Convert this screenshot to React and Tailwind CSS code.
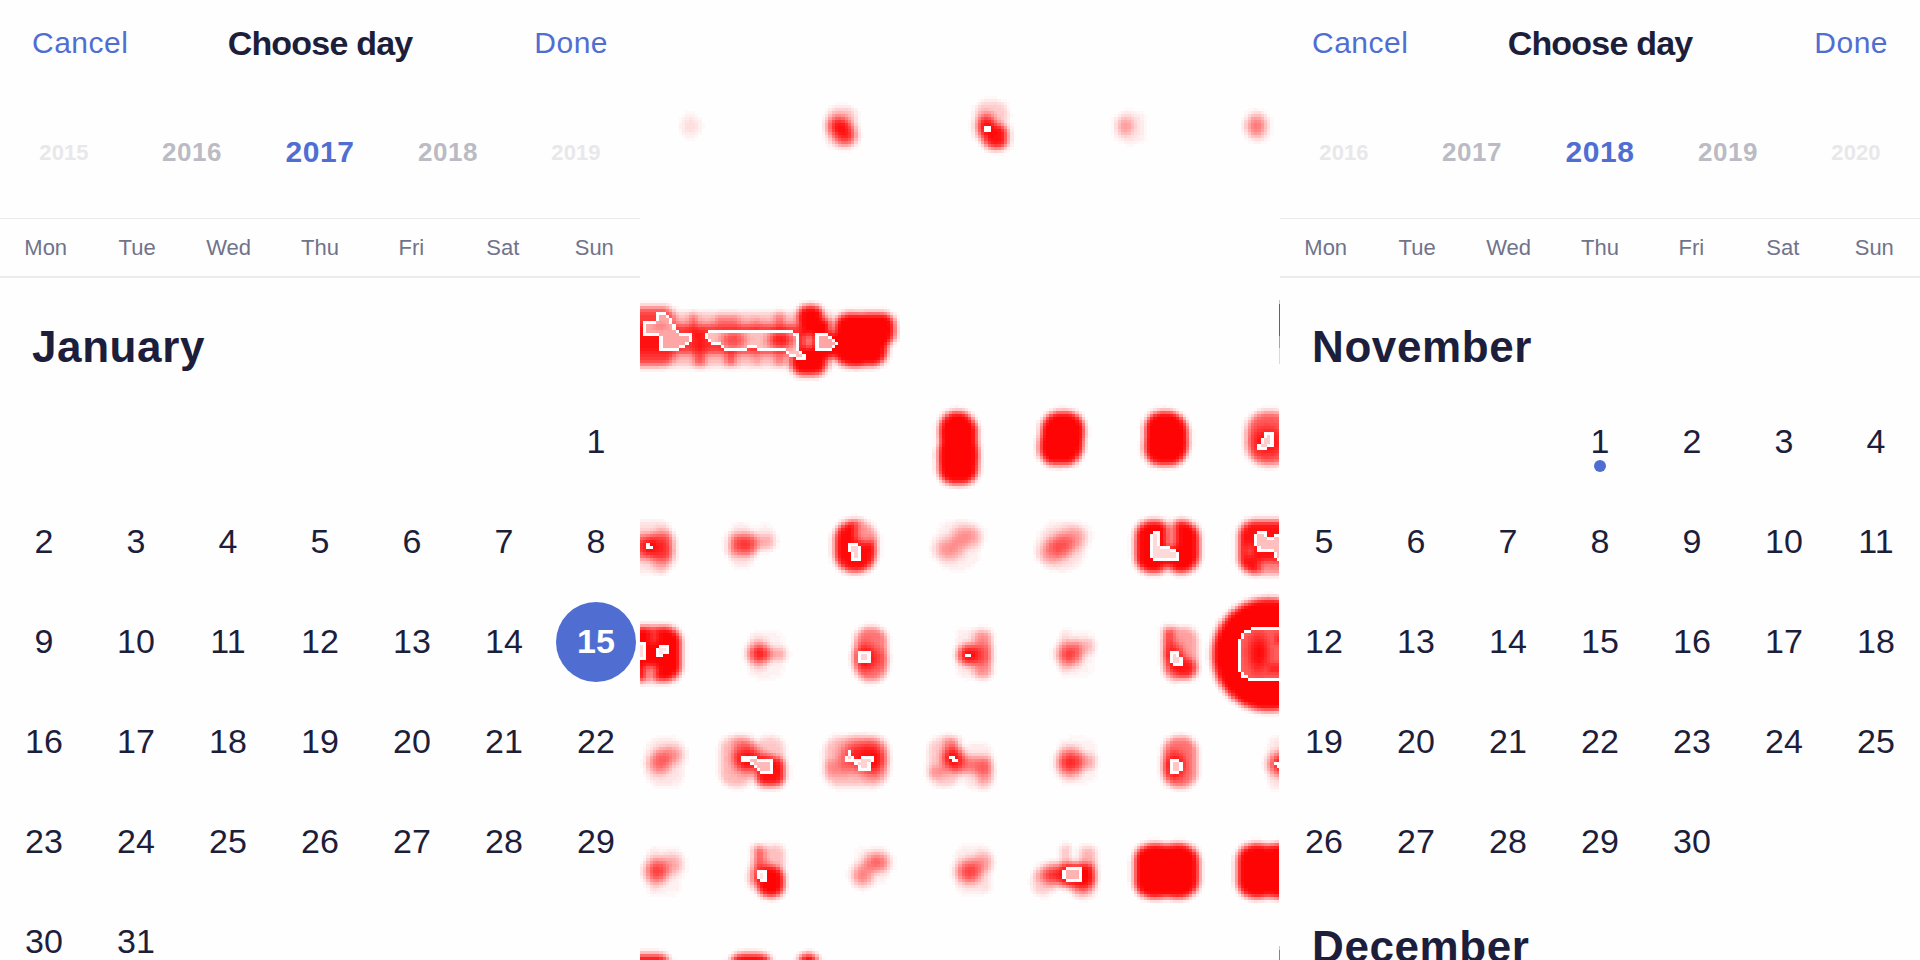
import React from "react";

const WEEKDAYS = ["Mon", "Tue", "Wed", "Thu", "Fri", "Sat", "Sun"];

const YEAR_STYLES = [
  "pt-px text-[22px] tracking-[0.1px] text-[#e8e8eb]",
  "text-[26px] tracking-[0.5px] text-[#bbbbc4]",
  "text-[30px] tracking-[0.6px] text-[#506ed2]",
  "text-[26px] tracking-[0.5px] text-[#bbbbc4]",
  "pt-px text-[22px] tracking-[0.1px] text-[#e8e8eb]",
];

function Day({ value, selected, marked }) {
  if (!value) return <div />;
  return (
    <div className="flex items-center justify-center">
      <div
        className={
          "relative flex size-20 items-center justify-center rounded-full pb-[2px] text-[34px] leading-none " +
          (selected ? "bg-[#506ed2] font-bold text-white" : "text-[#1c1e3c]")
        }
      >
        {value}
        {marked && <span className="absolute bottom-[10px] left-[34px] size-3 rounded-full bg-[#506ed2]" />}
      </div>
    </div>
  );
}

function Month({ name, offset, days, selected, marked }) {
  const cells = days ? [...Array(offset).fill(0), ...Array.from({ length: days }, (_, i) => i + 1)] : [];
  return (
    <section>
      <h2 className="flex h-[100px] items-center pl-8 pt-[9px] text-[44px] font-bold leading-none tracking-[0.6px] text-[#1c1e3c]">
        {name}
      </h2>
      <div className="-mx-[2px] grid auto-rows-[100px] grid-cols-7">
        {cells.map((d, i) => (
          <Day key={i} value={d} selected={d && d === selected} marked={d && d === marked} />
        ))}
      </div>
    </section>
  );
}

function Picker({ years, children }) {
  return (
    <div className="flex h-[960px] w-[640px] shrink-0 flex-col overflow-hidden bg-[#fefefe]">
      <header className="grid h-[86px] shrink-0 grid-cols-[1fr_auto_1fr] items-center px-8 pb-px leading-none">
        <button className="justify-self-start text-[30px] tracking-[0.5px] text-[#506ed2]">Cancel</button>
        <h1 className="text-[34px] font-bold tracking-[-0.8px] text-[#1c1e3c]">Choose day</h1>
        <button className="justify-self-end text-[30px] tracking-[0.5px] text-[#506ed2]">Done</button>
      </header>
      <nav className="grid h-[132px] shrink-0 grid-cols-5 items-center text-center font-bold leading-none">
        {years.map((y, i) => (
          <span key={y} className={YEAR_STYLES[i]}>{y}</span>
        ))}
      </nav>
      <div className="grid h-[60px] shrink-0 grid-cols-7 items-center border-b-2 border-t border-[#ebebed] text-center text-[22px] leading-none text-[#70738a]">
        {WEEKDAYS.map((d) => (
          <span key={d}>{d}</span>
        ))}
      </div>
      <div className="pt-[14px]">{children}</div>
    </div>
  );
}

/*
 * Heat map data. Each group has an origin and scale; `s` are soft rounded
 * boxes [x0, y0, x1, y1, radius, amount, fade] (a negative amount lightens),
 * `p` are contour areas [interior amount, points] with a white border.
 */
const GROUPS = [
  {
    o: [640, 80], k: [2.45, 2.95],
    s: [
      [88, 85, 160, 185, 28, 0.14, 40],
      [450, 70, 540, 207, 35, 0.22, 22], [444, 88, 532, 186, 35, 0.95, 38], [462, 115, 544, 210, 35, 0.8, 38],
      [812, 53, 910, 155, 40, 0.2, 20], [810, 78, 888, 200, 28, 1, 38], [830, 118, 915, 217, 38, 0.95, 30],
      [1160, 85, 1245, 195, 35, 0.09, 20], [1154, 92, 1224, 181, 28, 0.34, 38],
      [1475, 80, 1555, 195, 35, 0.25, 38], [1470, 82, 1544, 188, 28, 0.4, 38],
    ],
    p: [[0, [847, 134, 857, 134, 857, 156, 847, 156]]],
  },
  {
    o: [640, 290], k: [3, 3],
    s: [
      [-60, 55, 590, 242, 20, 0.26, 28], [-60, 88, 560, 207, 40, 0.75, 32], [-80, 35, 118, 242, 50, 0.7, 32],
      [138, 60, 182, 150, 20, 0.5, 25], [150, 110, 208, 240, 20, 0.6, 25], [215, 65, 310, 125, 20, 0.35, 25],
      [245, 140, 300, 238, 20, 0.6, 25], [330, 75, 370, 235, 20, 0.3, 25], [395, 58, 443, 238, 20, 0.45, 25],
      [460, 33, 563, 128, 46, 1, 26], [438, 165, 575, 270, 52, 1, 28], [475, 80, 580, 215, 15, 1, 20],
      [570, 56, 700, 242, 58, 1, 26], [630, 56, 778, 180, 52, 1, 26], [600, 90, 755, 240, 58, 1, 26], [530, 115, 660, 215, 15, 1, 26],
      [482, 125, 530, 182, 20, -0.5, 20],
    ],
    p: [
      [0.34, [6, 92, 48, 92, 48, 70, 78, 70, 95, 90, 117, 125, 159, 130, 148, 165, 117, 178, 80, 186, 57, 178, 57, 137, 17, 137, 6, 125]],
      [0.26, [198, 130, 215, 120, 440, 120, 478, 130, 482, 186, 500, 200, 488, 216, 465, 205, 430, 180, 330, 178, 265, 187, 240, 165, 215, 160, 198, 145]],
      [0.35, [530, 130, 560, 130, 575, 142, 594, 157, 594, 166, 578, 176, 560, 186, 530, 186]],
    ],
    h: [[220, 105, 340, 195, 25, 0.6, 40], [360, 105, 485, 195, 25, 0.85, 40], [20, 90, 100, 130, 20, 0.2, 40]],
  },
  {
    o: [920, 390], k: [3, 3],
    s: [
      [47, 52, 177, 190, 60, 1, 26], [42, 130, 187, 296, 60, 1, 26], [48, 85, 184, 240, 36, 1, 26],
      [353, 52, 505, 190, 65, 1, 26], [345, 105, 497, 238, 60, 1, 26], [352, 85, 502, 205, 36, 1, 28],
      [662, 52, 805, 180, 62, 1, 26], [660, 105, 810, 238, 60, 1, 26], [666, 60, 817, 230, 70, 1, 26],
      [965, 50, 1130, 240, 75, 0.65, 32], [968, 85, 1112, 225, 35, 0.95, 38],
      [35, 380, 190, 550, 70, 0.06, 20], [22, 425, 155, 530, 40, 0.42, 42], [68, 388, 208, 492, 40, 0.42, 42],
      [345, 385, 505, 552, 75, 0.1, 20], [334, 435, 460, 540, 38, 0.4, 40], [358, 408, 492, 522, 38, 0.6, 42], [405, 385, 525, 495, 35, 0.3, 35],
      [632, 378, 770, 562, 62, 1, 28], [715, 378, 852, 562, 68, 1, 28], [650, 400, 830, 550, 30, 0.6, 30],
      [728, 365, 778, 480, 20, -0.5, 20], [718, 515, 762, 570, 15, -0.4, 22],
      [942, 378, 1200, 565, 62, 0.95, 28], [1005, 500, 1100, 570, 20, -0.5, 30], [965, 455, 1010, 510, 20, -0.25, 25],
    ],
    p: [
      [0.2, [1016, 182, 1016, 162, 1026, 160, 1026, 140, 1036, 128, 1058, 128, 1058, 168, 1038, 170, 1036, 182]],
      [0.14, [693, 430, 703, 422, 724, 422, 724, 468, 745, 470, 775, 488, 775, 511, 703, 511, 693, 500]],
      [0.25, [1004, 430, 1017, 422, 1036, 422, 1038, 440, 1062, 440, 1066, 430, 1095, 430, 1095, 511, 1068, 511, 1055, 482, 1036, 482, 1034, 489, 1017, 489, 1004, 465]],
    ],
  },
  {
    o: [640, 500], k: [3, 3],
    s: [
      [-40, 52, 104, 228, 50, 0.12, 22], [-60, 85, 112, 195, 35, 0.5, 32], [10, 62, 120, 236, 40, 0.6, 42], [-20, 98, 80, 182, 26, 1, 38],
      [260, 60, 350, 215, 40, 0.1, 25], [340, 65, 410, 160, 30, 0.06, 20], [250, 85, 360, 185, 35, 0.38, 32], [270, 88, 418, 160, 30, 0.28, 30], [256, 96, 375, 178, 26, 0.55, 38],
      [570, 48, 722, 230, 72, 0.97, 28], [635, 45, 725, 140, 35, -0.55, 30],
      [-70, 366, 138, 558, 62, 1, 28], [0, 485, 62, 570, 20, -0.6, 32], [20, 370, 62, 440, 18, -0.25, 24],
      [320, 385, 440, 545, 35, 0.05, 20], [322, 393, 390, 530, 28, 0.1, 28], [305, 412, 408, 510, 38, 0.85, 40], [340, 430, 452, 495, 28, 0.32, 30],
      [635, 370, 752, 555, 52, 0.55, 26], [624, 408, 728, 538, 42, 1, 38], [685, 430, 757, 525, 32, 0.38, 36],
    ],
    p: [
      [0, [16, 131, 28, 131, 28, 140, 38, 140, 38, 151, 16, 151]],
      [0.18, [624, 131, 656, 131, 665, 148, 665, 181, 636, 181, 634, 152, 624, 152]],
      [0.15, [-20, 422, 19, 422, 19, 481, -20, 481]],
      [0.1, [46, 440, 58, 440, 58, 431, 78, 431, 88, 442, 88, 463, 68, 463, 66, 472, 46, 472]],
      [0.18, [653, 460, 662, 450, 694, 450, 694, 482, 684, 493, 662, 493, 653, 484]],
    ],
  },
  {
    o: [940, 580], k: [3, 3],
    s: [
      [42, 140, 165, 300, 30, 0.08, 18], [86, 138, 168, 308, 36, 0.42, 32], [42, 178, 166, 270, 38, 0.45, 32], [38, 182, 136, 268, 26, 1, 36],
      [350, 140, 470, 300, 40, 0.04, 20], [330, 165, 448, 280, 42, 0.75, 42], [355, 142, 395, 290, 18, 0.1, 18], [385, 165, 474, 235, 28, 0.26, 28],
      [660, 132, 782, 308, 48, 0.38, 22], [658, 130, 715, 250, 20, 0.7, 30], [660, 165, 750, 318, 35, 1, 38], [695, 220, 782, 308, 42, 0.85, 30],
      [803, 42, 1169, 406, 182, 1, 26],
      [-45, 462, 72, 630, 50, 0.22, 25], [60, 480, 165, 635, 40, 0.09, 22], [0, 458, 68, 545, 25, 0.4, 30], [-14, 482, 92, 591, 32, 1, 36],
      [20, 515, 168, 595, 32, 0.5, 32], [90, 525, 174, 640, 34, 0.4, 36], [-45, 545, 35, 605, 28, 0.3, 28],
      [345, 465, 478, 620, 40, 0.05, 20], [330, 486, 450, 608, 42, 0.85, 42], [390, 508, 480, 582, 32, 0.32, 32], [355, 480, 430, 615, 25, 0.06, 20],
      [658, 458, 782, 635, 56, 0.55, 26], [652, 488, 756, 628, 42, 1, 38],
      [975, 460, 1120, 640, 40, 0.1, 22], [962, 495, 1096, 610, 38, 1, 36],
    ],
    p: [
      [0, [77, 221, 97, 221, 97, 232, 77, 232]],
      [0.18, [692, 212, 714, 212, 724, 230, 724, 262, 703, 262, 703, 250, 692, 248]],
      [0.66, [894, 178, 906, 165, 916, 153, 936, 143, 1040, 143, 1040, 301, 922, 301, 906, 288, 894, 265]],
      [0, [26, 524, 46, 524, 46, 533, 58, 533, 58, 544, 38, 544, 36, 537, 26, 537]],
      [0.22, [684, 545, 693, 533, 713, 533, 724, 545, 724, 570, 713, 583, 693, 583, 684, 575]],
      [0, [1004, 542, 1040, 542, 1040, 562, 1014, 562, 1014, 552, 1004, 552]],
    ],
    h: [[905, 130, 1005, 310, 30, 0.9, 40], [990, 150, 1060, 205, 20, 0.6, 30], [970, 235, 1060, 295, 20, 0.6, 30]],
  },
  {
    o: [640, 700], k: [3, 2.985],
    s: [
      [12, 105, 140, 268, 50, 0.09, 18], [4, 136, 115, 242, 38, 0.55, 38], [25, 120, 152, 208, 30, 0.42, 38],
      [230, 98, 350, 270, 50, 0.28, 26], [335, 98, 445, 270, 50, 0.22, 26], [265, 98, 360, 200, 35, 0.35, 32], [254, 115, 395, 240, 38, 0.95, 38], [332, 155, 449, 272, 44, 0.95, 32], [285, 150, 410, 215, 20, 0.6, 28],
      [543, 98, 755, 270, 55, 0.26, 26], [570, 92, 745, 242, 50, 0.85, 42], [640, 95, 760, 260, 48, 0.95, 36], [543, 165, 640, 240, 30, 0.3, 30],
      [15, 430, 135, 590, 40, 0.05, 20], [-4, 452, 106, 570, 42, 0.75, 42], [40, 442, 150, 540, 36, 0.32, 34], [20, 430, 60, 590, 18, 0.06, 18],
      [328, 423, 388, 560, 25, 0.65, 28], [360, 423, 445, 525, 38, 0.25, 22], [310, 465, 430, 590, 45, 0.7, 40], [340, 483, 447, 602, 50, 1, 28],
      [640, 430, 752, 560, 30, 0.05, 20], [618, 470, 716, 576, 34, 0.48, 34], [650, 438, 770, 532, 34, 0.6, 34],
      [-80, 745, 112, 1000, 60, 1, 30], [250, 745, 415, 1000, 60, 1, 26], [460, 745, 550, 1000, 45, 1, 26],
    ],
    p: [
      [0.28, [307, 164, 340, 164, 350, 175, 385, 175, 404, 184, 404, 212, 388, 222, 362, 220, 340, 200, 328, 183, 307, 183]],
      [0.18, [612, 164, 622, 164, 622, 153, 636, 153, 640, 172, 658, 174, 664, 164, 705, 164, 705, 183, 694, 186, 694, 213, 656, 213, 652, 195, 638, 183, 612, 183]],
      [0.1, [350, 514, 360, 503, 371, 503, 382, 514, 382, 543, 360, 543, 350, 533]],
    ],
  },
  {
    o: [940, 780], k: [3, 3],
    s: [
      [40, 190, 160, 350, 40, 0.07, 15], [28, 218, 148, 332, 42, 0.75, 42], [82, 200, 174, 296, 32, 0.36, 34], [105, 280, 160, 345, 25, 0.06, 20],
      [265, 258, 355, 358, 42, 0.2, 28], [270, 234, 430, 334, 34, 0.85, 36], [355, 185, 400, 270, 20, 0.25, 20], [405, 188, 480, 285, 32, 0.3, 28], [345, 235, 480, 335, 42, 1, 32], [375, 258, 482, 366, 42, 0.75, 36],
      [570, 180, 710, 366, 62, 1, 26], [645, 180, 790, 366, 66, 1, 26], [620, 183, 740, 363, 20, 1, 26],
      [878, 180, 1010, 366, 62, 1, 26], [955, 180, 1110, 366, 66, 1, 26], [930, 183, 1050, 363, 20, 1, 26],
    ],
    p: [[0.3, [369, 270, 381, 262, 430, 262, 430, 304, 381, 304, 369, 294]]],
  },
];

const COLS = 197;
const CELL_W = 640 / COLS;
const CELL_H = 3;
const ROWS = 320;
const LEVELS = 40;

/* Wide fades fall off elliptically from the centre, narrow ones follow the box edge. */
function softBox(x, y, [x0, y0, x1, y1, r, amount, fade]) {
  const hw = (x1 - x0) / 2;
  const hh = (y1 - y0) / 2;
  const px = Math.abs(x - (x0 + x1) / 2);
  const py = Math.abs(y - (y0 + y1) / 2);
  let t;
  if (fade >= 34) {
    t = 1.12 * (1 - Math.hypot(px / hw, py / hh));
  } else {
    const rad = Math.min(r, hw, hh);
    const qx = px - hw + rad;
    const qy = py - hh + rad;
    const dist = Math.hypot(Math.max(qx, 0), Math.max(qy, 0)) + Math.min(Math.max(qx, qy), 0) - rad;
    t = -dist / fade;
  }
  t = Math.min(1, Math.max(0, t));
  return amount * t * t * (3 - 2 * t);
}

function inside(x, y, pts) {
  let hit = false;
  const n = pts.length / 2;
  for (let i = 0, j = n - 1; i < n; j = i++) {
    const xi = pts[2 * i], yi = pts[2 * i + 1], xj = pts[2 * j], yj = pts[2 * j + 1];
    if (yi > y !== yj > y && x < ((xj - xi) * (y - yi)) / (yj - yi) + xi) hit = !hit;
  }
  return hit;
}

function smooth(grid) {
  const out = new Float32Array(grid.length);
  const W = [1, 2, 1];
  for (let r = 0; r < ROWS; r++) {
    for (let c = 0; c < COLS; c++) {
      let sum = 0;
      for (let a = -1; a <= 1; a++) {
        for (let b = -1; b <= 1; b++) {
          const rr = Math.min(ROWS - 1, Math.max(0, r + a));
          const cc = Math.min(COLS - 1, Math.max(0, c + b));
          sum += grid[rr * COLS + cc] * W[a + 1] * W[b + 1];
        }
      }
      out[r * COLS + c] = sum / 16;
    }
  }
  return out;
}

function buildHeat() {
  let grid = new Float32Array(COLS * ROWS);
  const each = (g, box, fn) => {
    const cx = (c) => ((c + 0.5) * CELL_W + 640 - g.o[0]) * g.k[0];
    const cy = (r) => ((r + 0.5) * CELL_H - g.o[1]) * g.k[1];
    for (let r = 0; r < ROWS; r++) {
      const y = cy(r);
      if (y < box[1] || y > box[3]) continue;
      for (let c = 0; c < COLS; c++) {
        const x = cx(c);
        if (x >= box[0] && x <= box[2]) fn(x, y, r * COLS + c);
      }
    }
  };
  const paint = (g, s) =>
    each(g, s, (x, y, i) => {
      const v = softBox(x, y, s);
      grid[i] = v >= 0 ? 1 - (1 - grid[i]) * (1 - v) : grid[i] * (1 + v);
    });
  GROUPS.forEach((g) => g.s.forEach((s) => paint(g, s)));
  grid = smooth(grid);
  GROUPS.forEach((g) => {
    const dx = CELL_W * g.k[0];
    const dy = CELL_H * g.k[1];
    g.p.forEach(([fill, pts]) => {
      each(g, [-100, -100, 2000, 2000], (x, y, i) => {
        if (!inside(x, y, pts)) return;
        const inner =
          inside(x - dx, y, pts) && inside(x + dx, y, pts) && inside(x, y - dy, pts) && inside(x, y + dy, pts);
        grid[i] = inner ? fill : -1;
      });
    });
    (g.h || []).forEach((s) =>
      each(g, s, (x, y, i) => {
        if (grid[i] >= 0) grid[i] = 1 - (1 - grid[i]) * (1 - softBox(x, y, s));
      })
    );
  });
  const layers = Array.from({ length: LEVELS + 1 }, () => "");
  const edge = (c) => Math.round(c * CELL_W);
  for (let r = 0; r < ROWS; r++) {
    let c = 0;
    while (c < COLS) {
      const level = Math.round(Math.max(0, grid[r * COLS + c]) * LEVELS);
      let e = c + 1;
      while (e < COLS && Math.round(Math.max(0, grid[r * COLS + e]) * LEVELS) === level) e++;
      if (level > 0) layers[level] += `M${edge(c)} ${r * CELL_H}H${edge(e)}v${CELL_H}H${edge(c)}z`;
      c = e;
    }
  }
  return layers;
}

const HEAT = buildHeat();

function HeatMap() {
  return (
    <div className="h-[960px] w-[640px] shrink-0 bg-[#fefefe]">
      <svg width="640" height="960" viewBox="0 0 640 960" shapeRendering="crispEdges" className="block">
        {HEAT.map((d, i) => d && <path key={i} d={d} fill="#ff0404" fillOpacity={i / LEVELS} />)}
        <rect x="639" y="0" width="1" height="960" fill="#fefefe" />
        <rect x="639" y="300" width="1" height="4" fill="#ffb0b0" />
        <rect x="639" y="304" width="1" height="32" fill="#ff2020" />
        <rect x="639" y="336" width="1" height="12" fill="#ff8080" />
        <rect x="639" y="348" width="1" height="16" fill="#ffcaca" />
        <rect x="639" y="946" width="1" height="4" fill="#ffb0b0" />
        <rect x="639" y="950" width="1" height="10" fill="#ff5050" />
      </svg>
    </div>
  );
}

export default function App() {
  return (
    <main className="flex h-[960px] w-[1920px] overflow-hidden bg-[#fefefe] font-['Liberation_Sans',Arial,sans-serif]">
      <Picker years={[2015, 2016, 2017, 2018, 2019]}>
        <Month name="January" offset={6} days={31} selected={15} />
      </Picker>
      <HeatMap />
      <Picker years={[2016, 2017, 2018, 2019, 2020]}>
        <Month name="November" offset={3} days={30} marked={1} />
        <Month name="December" />
      </Picker>
    </main>
  );
}
